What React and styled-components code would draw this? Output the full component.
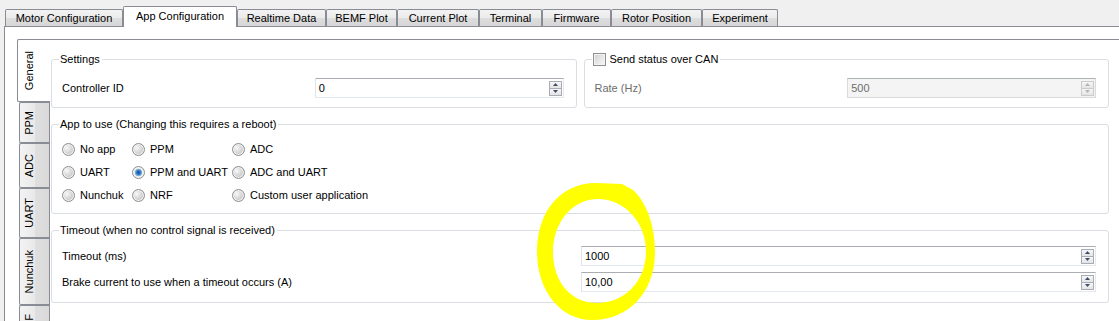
import React from 'react';
import styled, { createGlobalStyle } from 'styled-components';

const topTabs = [
  { label: 'Motor Configuration', width: 118 },
  { label: 'App Configuration', width: 114, active: true },
  { label: 'Realtime Data', width: 89 },
  { label: 'BEMF Plot', width: 71 },
  { label: 'Current Plot', width: 82 },
  { label: 'Terminal', width: 63 },
  { label: 'Firmware', width: 69 },
  { label: 'Rotor Position', width: 91 },
  { label: 'Experiment', width: 76 },
];

const sideTabs = [
  { label: 'General', length: 63, active: true },
  { label: 'PPM', length: 41 },
  { label: 'ADC', length: 45 },
  { label: 'UART', length: 50 },
  { label: 'Nunchuk', length: 67 },
  { label: 'NRF', length: 40 },
];

const apps = [
  { label: 'No app' },
  { label: 'PPM' },
  { label: 'ADC' },
  { label: 'UART' },
  { label: 'PPM and UART', checked: true },
  { label: 'ADC and UART' },
  { label: 'Nunchuk' },
  { label: 'NRF' },
  { label: 'Custom user application' },
];

const GlobalStyle = createGlobalStyle`
  body {
    margin: 0;
    background: #f0f0f0;
    font-family: "Liberation Sans", Arial, sans-serif;
    font-size: 11px;
    color: #000;
  }
`;

const SpinArrow = ({ up, disabled }) => (
  <svg width="5" height="3" viewBox="0 0 5 3">
    <path d={up ? 'M0 3 L2.5 0 L5 3Z' : 'M0 0 L5 0 L2.5 3Z'} fill={disabled ? '#b4b4b4' : '#3c4a6b'} />
  </svg>
);

const SpinBox = ({ value, disabled }) => (
  <SpinFrame $disabled={disabled}>
    <SpinValue $disabled={disabled}>{value}</SpinValue>
    <SpinButtons>
      <SpinButton $disabled={disabled}><SpinArrow up disabled={disabled} /></SpinButton>
      <SpinButton $disabled={disabled}><SpinArrow disabled={disabled} /></SpinButton>
    </SpinButtons>
  </SpinFrame>
);

// hand drawn marker ring, thicker on the left like a felt pen stroke
const ringPath =
  'M596 183 L622 184 L633 190 C647 203 655 226 655 252 C655 291 630 320 592 320 C560 320 537 290 537 252 C537 212 560 183 596 183 Z ' +
  'M598 199 C624 199 646 222 646 251 C646 282 624 303 597 303 C571 303 553 282 553 252 C553 222 573 199 598 199 Z';

const App = () => (
  <Window>
    <GlobalStyle />
    <TabBar>
      {topTabs.map(tab => (
        <TopTab key={tab.label} $width={tab.width} $active={tab.active}>
          {tab.label}
        </TopTab>
      ))}
    </TabBar>

    <OuterPane>
      <SideTabs>
        {sideTabs.map(tab => (
          <SideTab key={tab.label} $length={tab.length} $active={tab.active}>
            <SideLabel>{tab.label}</SideLabel>
          </SideTab>
        ))}
      </SideTabs>

      <PagePane>
        <PageColumn>
          <GroupRow>
            <GroupBox>
              <Legend>Settings</Legend>
              <GroupBody $top={12} $bottom={9}>
                <FormGrid>
                  <FieldLabel>Controller ID</FieldLabel>
                  <SpinBox value="0" />
                </FormGrid>
              </GroupBody>
            </GroupBox>

            <GroupBox>
              <Legend>
                <CheckBox />
                Send status over CAN
              </Legend>
              <GroupBody $top={12} $bottom={9}>
                <FormGrid>
                  <FieldLabel $disabled>Rate (Hz)</FieldLabel>
                  <SpinBox value="500" disabled />
                </FormGrid>
              </GroupBody>
            </GroupBox>
          </GroupRow>

          <GroupBox>
            <Legend>App to use (Changing this requires a reboot)</Legend>
            <GroupBody $top={10} $bottom={10}>
              <RadioGrid>
                {apps.map(app => (
                  <RadioOption key={app.label}>
                    <RadioCircle $checked={app.checked} />
                    {app.label}
                  </RadioOption>
                ))}
              </RadioGrid>
            </GroupBody>
          </GroupBox>

          <GroupBox>
            <Legend>Timeout (when no control signal is received)</Legend>
            <GroupBody $top={9} $bottom={10}>
              <FormGrid>
                <FieldLabel>Timeout (ms)</FieldLabel>
                <SpinBox value="1000" />
                <FieldLabel>Brake current to use when a timeout occurs (A)</FieldLabel>
                <SpinBox value="10,00" />
              </FormGrid>
            </GroupBody>
          </GroupBox>
        </PageColumn>
      </PagePane>
    </OuterPane>

    <Scribble width="1119" height="321" viewBox="0 0 1119 321">
      <path d={ringPath} fill="#ffff00" fillRule="evenodd" />
    </Scribble>
  </Window>
);

const Window = styled.div`
  position: relative;
  width: 1119px;
  height: 321px;
  overflow: hidden;
  background: #f0f0f0;
`;

const TabBar = styled.div`
  display: flex;
  align-items: flex-end;
  height: 26px;
  padding-left: 5px;
  box-sizing: border-box;
  position: relative;
  z-index: 1;
`;

const TopTab = styled.div`
  box-sizing: border-box;
  width: ${p => p.$width}px;
  height: ${p => (p.$active ? 21 : 17)}px;
  margin-bottom: ${p => (p.$active ? -1 : 0)}px;
  border: 1px solid #898c95;
  border-bottom: none;
  border-radius: 2px 2px 0 0;
  background: ${p => (p.$active
    ? '#fff'
    : 'linear-gradient(to bottom, #f3f3f3 0%, #ebebeb 50%, #dedede 51%, #d6d6d6 100%)')};
  display: flex;
  align-items: center;
  justify-content: center;
  padding-bottom: ${p => (p.$active ? 2 : 0)}px;
  white-space: nowrap;
`;

const OuterPane = styled.div`
  display: flex;
  align-items: flex-start;
  margin-left: 4px;
  width: 1130px;
  height: 330px;
  box-sizing: border-box;
  border: 1px solid #898c95;
  background: #fff;
  padding: 12px 0 0 12px;
`;

const SideTabs = styled.div`
  display: flex;
  flex-direction: column;
  align-items: flex-end;
  width: 32px;
  flex-shrink: 0;
  position: relative;
  z-index: 1;
`;

const SideTab = styled.div`
  box-sizing: border-box;
  width: ${p => (p.$active ? 33 : 30)}px;
  height: ${p => p.$length}px;
  margin-right: ${p => (p.$active ? -1 : 0)}px;
  border: 1px solid #898c95;
  border-right: none;
  border-radius: 2px 0 0 2px;
  background: ${p => (p.$active
    ? '#fff'
    : 'linear-gradient(to right, #f3f3f3 0%, #e9e9e9 50%, #dfdfdf 51%, #d9d9d9 100%)')};
  display: flex;
  align-items: center;
  padding-left: ${p => (p.$active ? 5 : 3)}px;
`;

const SideLabel = styled.span`
  writing-mode: vertical-rl;
  transform: rotate(180deg);
  line-height: 13px;
  white-space: nowrap;
`;

const PagePane = styled.div`
  flex: 1;
  align-self: stretch;
  border-top: 1px solid #898c95;
  border-left: 1px solid #898c95;
  background: #fff;
  padding: 13px 0 0 1px;
`;

const PageColumn = styled.div`
  display: flex;
  flex-direction: column;
  gap: 10px;
  width: 1058px;
`;

const GroupRow = styled.div`
  display: grid;
  grid-template-columns: 1fr 1fr;
  column-gap: 7px;
`;

const GroupBox = styled.fieldset`
  margin: 0;
  padding: 0;
  min-width: 0;
  border: 1px solid #dadee2;
  border-radius: 3px;
`;

const Legend = styled.legend`
  display: flex;
  align-items: center;
  gap: 4px;
  margin-left: 7px;
  padding: 0 2px 0 1px;
  line-height: 13px;
  height: 13px;
`;

const GroupBody = styled.div`
  padding: ${p => p.$top}px 12px ${p => p.$bottom}px 10px;
`;

const FormGrid = styled.div`
  display: grid;
  grid-template-columns: 1fr 1fr;
  column-gap: 4px;
  row-gap: 6px;
  align-items: center;
`;

const FieldLabel = styled.div`
  color: ${p => (p.$disabled ? '#6d6d6d' : '#000')};
  white-space: nowrap;
`;

const SpinFrame = styled.div`
  display: flex;
  align-items: center;
  height: 20px;
  box-sizing: border-box;
  border: 1px solid;
  border-color: ${p => (p.$disabled
    ? '#adb2b5 #dadada #dadada #dadada'
    : '#abadb3 #e3e9ef #e3e9ef #e2e3ea')};
  background: ${p => (p.$disabled ? '#f4f4f4' : '#fff')};
  padding: 0 1px 0 3px;
`;

const SpinValue = styled.span`
  flex: 1;
  color: ${p => (p.$disabled ? '#6d6d6d' : '#000')};
`;

const SpinButtons = styled.div`
  display: flex;
  flex-direction: column;
`;

const SpinButton = styled.div`
  box-sizing: border-box;
  width: 13px;
  height: 8px;
  border: 1px solid ${p => (p.$disabled ? '#cbcbcb' : '#a9acb3')};
  background: linear-gradient(to bottom, #f7f7f7, #e4e4e4);
  display: flex;
  align-items: center;
  justify-content: center;

  & + & {
    margin-top: -1px;
  }
`;

const CheckBox = styled.span`
  box-sizing: border-box;
  width: 13px;
  height: 13px;
  border: 1px solid #8e8f8f;
  background: linear-gradient(135deg, #cbcbcb 0%, #e6e6e6 50%, #f7f7f7 100%);
  box-shadow: inset 0 0 0 1px #f4f4f4;
`;

const RadioGrid = styled.div`
  display: grid;
  grid-template-columns: 70px 100px max-content;
  grid-auto-rows: 16px;
  row-gap: 7px;
`;

const RadioOption = styled.div`
  display: flex;
  align-items: center;
  gap: 5px;
  white-space: nowrap;
`;

const RadioCircle = styled.span`
  box-sizing: border-box;
  width: 13px;
  height: 13px;
  border-radius: 50%;
  border: 1px solid #8e8f8f;
  background: ${p => (p.$checked
    ? 'radial-gradient(circle at 50% 50%, #1b4f8a 0, #2f7bc4 2px, #8bbbe8 3.5px, #e9e9e9 4px, #f7f7f7 6px)'
    : 'radial-gradient(circle at 35% 35%, #f9f9f9 0, #e2e2e2 3px, #cfcfcf 6px)')};
  box-shadow: inset 0 0 0 1px #f2f2f2;
`;

const Scribble = styled.svg`
  position: absolute;
  left: 0;
  top: 0;
  pointer-events: none;
`;

export default App;
